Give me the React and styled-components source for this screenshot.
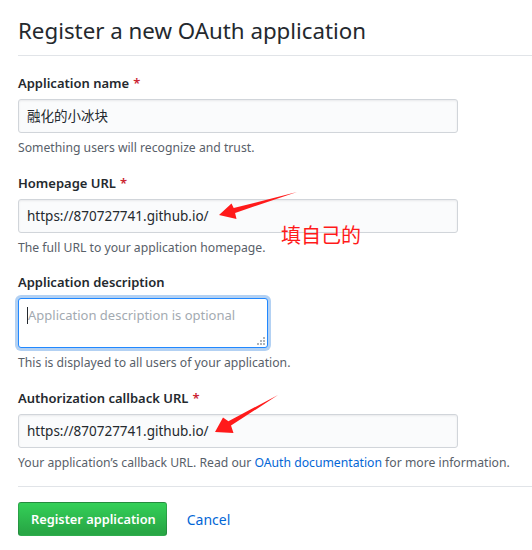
import React from 'react';
import styled, { createGlobalStyle } from 'styled-components';

const GlobalStyle = createGlobalStyle`
  body {
    margin: 0;
    background: #fff;
    font-family: "Noto Sans", "Noto Sans CJK SC", sans-serif;
    color: #24292e;
  }
`;

const Page = styled.div`
  position: relative;
  width: 532px;
  height: 550px;
  overflow: hidden;
  padding-left: 18px;
  box-sizing: border-box;
`;

const Header = styled.div`
  padding: 16px 0 9px;
  border-bottom: 1px solid #e1e4e8;
`;

const Title = styled.h1`
  margin: 0;
  font-size: 22.3px;
  line-height: 30px;
  font-weight: 400;
`;

const Form = styled.form`
  padding-top: 17px;
  padding-right: 14px;
`;

const Group = styled.div`
  margin-bottom: ${(p) => p.$gap ?? 16}px;
`;

const Label = styled.label`
  display: block;
  font-size: 13px;
  line-height: 20px;
  font-weight: 600;
  margin-bottom: 6px;
`;

const Required = styled.span`
  color: #cb2431;
  margin-left: 4px;
`;

const Input = styled.div`
  box-sizing: border-box;
  width: 440px;
  height: 34px;
  padding: 6px 8px;
  font-size: 13.5px;
  line-height: 20px;
  background: #fafbfc;
  border: 1px solid #d1d5da;
  border-radius: 3px;
  box-shadow: inset 0 1px 2px rgba(27, 31, 35, 0.075);
`;

const TextArea = styled.div`
  position: relative;
  box-sizing: border-box;
  width: 250px;
  height: 50px;
  padding: 6px 9px;
  font-size: 13px;
  line-height: 20px;
  color: #a3aab1;
  background: #fff;
  border: 1px solid #2188ff;
  border-radius: 3px;
  box-shadow: 0 0 0 3px rgba(3, 102, 214, 0.3);
`;

const Caret = styled.span`
  position: absolute;
  left: 8px;
  top: 8px;
  width: 1px;
  height: 17px;
  background: #24292e;
`;

const Grip = styled.svg`
  position: absolute;
  right: 2px;
  bottom: 2px;
`;

const Note = styled.p`
  margin: 6px 0 0;
  font-size: 12.2px;
  line-height: 18px;
  color: #586069;
`;

const Link = styled.a`
  color: #0366d6;
  text-decoration: none;
  font-size: ${(p) => (p.$size ? `${p.$size}px` : 'inherit')};
`;

const Divider = styled.hr`
  border: 0;
  border-top: 1px solid #e1e4e8;
  margin: 14px -14px 15px 0;
`;

const Actions = styled.div`
  display: flex;
  align-items: center;
  gap: 20px;
`;

const Button = styled.button`
  height: 34px;
  padding: 0 10px 0 12px;
  font-family: inherit;
  font-size: 12.8px;
  font-weight: 600;
  color: #fff;
  background: linear-gradient(-180deg, #34d058 0%, #28a745 90%);
  border: 1px solid rgba(27, 31, 35, 0.2);
  border-radius: 3px;
`;

const Annotation = styled.div`
  position: absolute;
  left: 281px;
  top: 222px;
  font-size: 20px;
  line-height: 26px;
  color: #ff1a1a;
  font-family: "Noto Sans CJK SC", sans-serif;
`;

const Overlay = styled.svg`
  position: absolute;
  left: 0;
  top: 0;
  pointer-events: none;
`;

function Field({ label, required, value, note, gap }) {
  return (
    <Group $gap={gap}>
      <Label>
        {label}
        {required && <Required>*</Required>}
      </Label>
      <Input>{value}</Input>
      <Note>{note}</Note>
    </Group>
  );
}

export default function App() {
  return (
    <Page>
      <GlobalStyle />
      <Header>
        <Title>Register a new OAuth application</Title>
      </Header>
      <Form>
        <Field
          label="Application name"
          required
          value="融化的小冰块"
          note="Something users will recognize and trust."
        />
        <Field
          label="Homepage URL"
          required
          value="https://870727741.github.io/"
          note="The full URL to your application homepage."
          gap={15}
        />
        <Group>
          <Label>Application description</Label>
          <TextArea>
            <Caret />
            Application description is optional
            <Grip width="8" height="8" viewBox="0 0 8 8">
              <g fill="#b0b4b8">
                <rect x="6" y="0" width="2" height="2" />
                <rect x="3" y="3" width="2" height="2" />
                <rect x="6" y="3" width="2" height="2" />
                <rect x="0" y="6" width="2" height="2" />
                <rect x="3" y="6" width="2" height="2" />
                <rect x="6" y="6" width="2" height="2" />
              </g>
            </Grip>
          </TextArea>
          <Note>This is displayed to all users of your application.</Note>
        </Group>
        <Group $gap={0}>
          <Label>
            Authorization callback URL<Required>*</Required>
          </Label>
          <Input>https://870727741.github.io/</Input>
          <Note>
            Your application’s callback URL. Read our <Link href="#">OAuth documentation</Link> for more
            information.
          </Note>
        </Group>
        <Divider />
        <Actions>
          <Button type="button">Register application</Button>
          <Link href="#" $size={14}>Cancel</Link>
        </Actions>
      </Form>
      <Annotation>填自己的</Annotation>
      <Overlay width="532" height="550">
        <polygon
          fill="#ff1a1a"
          points="297,192 233.7,208.1 231.5,203.5 219,215 236.5,219 235.1,212.9"
        />
        <polygon
          fill="#ff1a1a"
          points="278,395 228.4,421.2 223,417.5 215,432 233.5,433 231,425.6"
        />
      </Overlay>
    </Page>
  );
}
